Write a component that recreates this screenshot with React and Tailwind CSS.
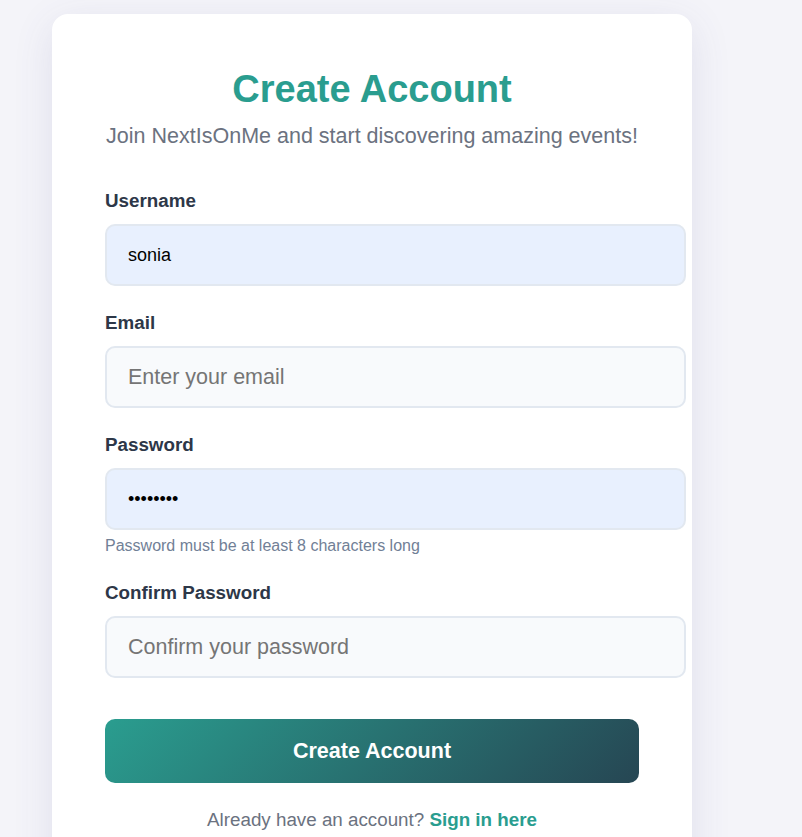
import React from "react";

export default function App() {
  return (
    <div className="min-h-[837px] bg-[#f4f4f9] pt-[14px] pl-[52px] font-['Liberation_Sans',Arial,sans-serif]">
      <div className="w-[640px] rounded-[16px] bg-white px-[53px] pt-[53px] pb-[48px] shadow-[0_10px_40px_rgba(70,70,140,0.12)]">
        <h1 className="text-center text-[38px] font-bold leading-[44px] text-[#2a9d8f]">Create Account</h1>
        <p className="mt-[11px] text-center text-[21.5px] leading-[28px] text-[#6b7280]">
          Join NextIsOnMe and start discovering amazing events!
        </p>

        <form className="mt-[39px]" onSubmit={(e) => e.preventDefault()}>
          <div className="mb-[25px]">
            <label className="mb-[11px] block text-[18.8px] font-bold leading-[24px] text-[#2d3748]">Username</label>
            <input
              type="text"
              defaultValue="sonia"
              className="block h-[62px] w-[581px] rounded-[10px] border-2 border-[#e2e8f0] bg-[#e8f0fe] px-[21px] text-[18px] text-black outline-none"
            />
          </div>
          <div className="mb-[25px]">
            <label className="mb-[11px] block text-[18.8px] font-bold leading-[24px] text-[#2d3748]">Email</label>
            <input
              type="email"
              placeholder="Enter your email"
              className="block h-[62px] w-[581px] rounded-[10px] border-2 border-[#e2e8f0] bg-[#f8fafc] px-[21px] text-[21.5px] text-black outline-none placeholder:text-[#757575]"
            />
          </div>
          <div className="mb-[25px]">
            <label className="mb-[11px] block text-[18.8px] font-bold leading-[24px] text-[#2d3748]">Password</label>
            <input
              type="password"
              defaultValue="sonia123"
              className="block h-[62px] w-[581px] rounded-[10px] border-2 border-[#e2e8f0] bg-[#e8f0fe] px-[21px] text-[18px] text-black outline-none"
            />
            <p className="mt-[5px] text-[16px] leading-[21px] text-[#718096]">Password must be at least 8 characters long</p>
          </div>
          <div>
            <label className="mb-[11px] block text-[18.8px] font-bold leading-[24px] text-[#2d3748]">Confirm Password</label>
            <input
              type="password"
              placeholder="Confirm your password"
              className="block h-[62px] w-[581px] rounded-[10px] border-2 border-[#e2e8f0] bg-[#f8fafc] px-[21px] text-[21.5px] text-black outline-none placeholder:text-[#757575]"
            />
          </div>
          <button
            type="submit"
            className="mt-[41px] block h-[64px] w-full rounded-[10px] bg-[linear-gradient(135deg,#2a9d8f,#264653)] text-[21.5px] font-bold text-white"
          >
            Create Account
          </button>
        </form>

        <p className="mt-[25px] text-center text-[18.8px] leading-[24px] text-[#6b7280]">
          Already have an account? <a href="#" className="font-bold text-[#2a9d8f]">Sign in here</a>
        </p>
      </div>
    </div>
  );
}
